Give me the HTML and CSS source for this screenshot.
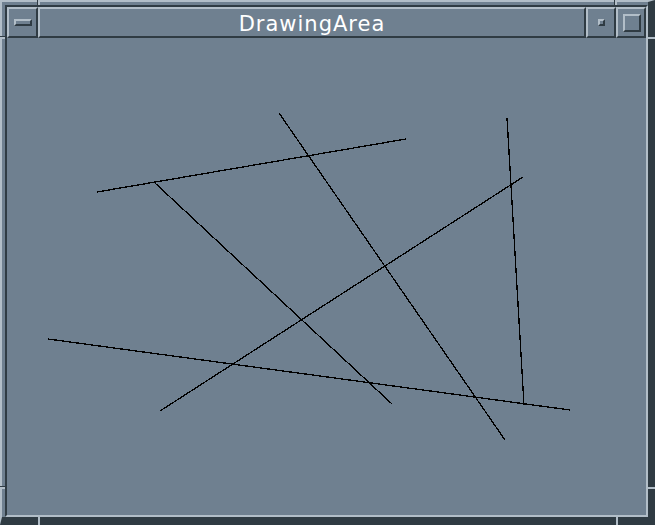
FILE: index.html
```html
<!DOCTYPE html>
<html>
<head>
<meta charset="utf-8">
<title>DrawingArea</title>
<link rel="stylesheet" href="styles.css">
</head>
<body>
<div class="screen">
  <div class="frame">
    <div class="sunken">
      <div class="titlebar">
        <div class="btn menu"><span class="glyph bar"></span></div>
        <div class="title">DrawingArea</div>
        <div class="btn min"><span class="glyph dot"></span></div>
        <div class="btn max"><span class="glyph square"></span></div>
      </div>
      <div class="client">
        <svg class="canvas" width="639" height="477" viewBox="7 38 639 477" xmlns="http://www.w3.org/2000/svg">
          <g stroke="#000" stroke-width="1.3" shape-rendering="crispEdges" fill="none">
            <line x1="97" y1="192" x2="406" y2="139"/>
            <line x1="155" y1="183" x2="392" y2="404"/>
            <line x1="279" y1="113" x2="505" y2="440"/>
            <line x1="507" y1="118" x2="524" y2="405"/>
            <line x1="523" y1="177" x2="160" y2="411"/>
            <line x1="48" y1="339" x2="570" y2="410"/>
          </g>
        </svg>
      </div>
    </div>
  </div>
  <span class="tick v t-left"></span>
  <span class="tick v t-right"></span>
  <span class="tick h l-top"></span>
  <span class="tick h r-top"></span>
  <span class="tick h l-bottom"></span>
  <span class="tick h r-bottom"></span>
  <span class="tick v b-left"></span>
  <span class="tick v b-right"></span>
</div>
</body>
</html>
```
FILE: styles.css
```css
html, body {
  margin: 0;
  padding: 0;
  background: #6f8090;
}

.screen {
  position: relative;
  width: 655px;
  height: 525px;
  overflow: hidden;
}

.frame {
  box-sizing: border-box;
  width: 655px;
  height: 525px;
  background: #6f8090;
  border-top: 2px solid #b2bec8;
  border-left: 2px solid #b2bec8;
  border-right: 7px solid #2f3b43;
  border-bottom: 8px solid #2f3b43;
  padding: 3px 0 0 3px;
}

.sunken {
  border-top: 2px solid #2f3b43;
  border-left: 2px solid #2f3b43;
  border-right: 2px solid #b2bec8;
  border-bottom: 2px solid #b2bec8;
  display: flex;
  flex-direction: column;
}

.titlebar {
  display: flex;
  height: 31px;
}

.btn, .title {
  box-sizing: border-box;
  height: 31px;
  border-top: 2px solid #b2bec8;
  border-left: 2px solid #b2bec8;
  border-right: 2px solid #2f3b43;
  border-bottom: 2px solid #2f3b43;
  display: flex;
  align-items: center;
  justify-content: center;
}

.menu { width: 31px; }
.min { width: 30px; }
.max { width: 30px; }

.title {
  flex: 1;
  color: #ffffff;
  font-family: "DejaVu Sans", sans-serif;
  font-size: 21px;
  letter-spacing: 1px;
  line-height: 24px;
  padding-top: 2px;
  white-space: nowrap;
}

.glyph {
  display: block;
  box-sizing: border-box;
  border-top: 2px solid #b2bec8;
  border-left: 2px solid #b2bec8;
  border-right: 2px solid #2f3b43;
  border-bottom: 2px solid #2f3b43;
}

.bar { width: 18px; height: 7px; margin-left: 1px; }
.dot { width: 7px; height: 7px; }
.square { width: 18px; height: 18px; margin-left: 1px; }

.client {
  width: 639px;
  height: 477px;
  overflow: hidden;
}

.canvas {
  display: block;
}

.tick {
  position: absolute;
  background: #b2bec8;
  box-sizing: border-box;
}

.tick.v {
  width: 3px;
  border-left: 1px solid #2f3b43;
}

.tick.h {
  height: 3px;
  border-top: 1px solid #2f3b43;
}

.t-left { left: 37px; top: 0; height: 5px; }
.t-right { left: 614px; top: 0; height: 5px; }
.b-left { left: 37px; top: 517px; height: 8px; }
.b-right { left: 615px; top: 517px; height: 8px; }
.l-top { left: 0; top: 36px; width: 5px; }
.l-bottom { left: 0; top: 486px; width: 5px; }
.r-top { left: 648px; top: 36px; width: 7px; }
.r-bottom { left: 648px; top: 486px; width: 7px; }
```
